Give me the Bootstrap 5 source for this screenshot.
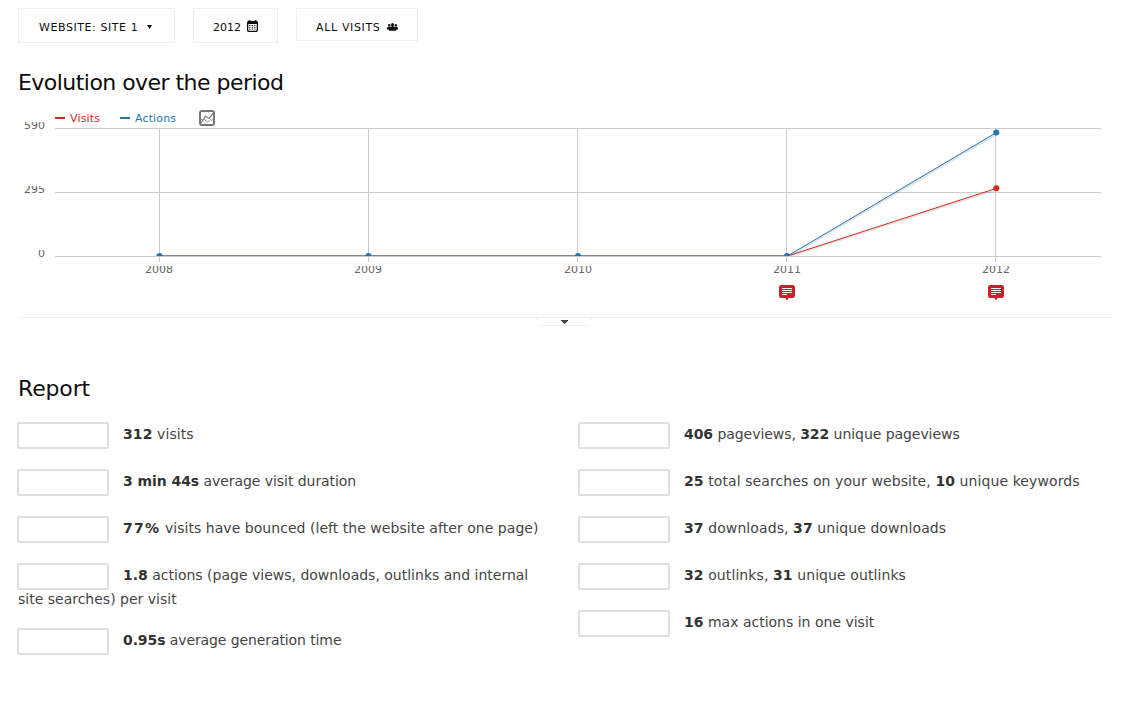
<!DOCTYPE html>
<html lang="en">
<head>
<meta charset="utf-8">
<meta name="viewport" content="width=device-width, initial-scale=1">
<title>Visits overview</title>
<link href="https://cdn.jsdelivr.net/npm/bootstrap@5.3.0/dist/css/bootstrap.min.css" rel="stylesheet">
<style>
body{font-family:"DejaVu Sans",sans-serif;color:#444;background:#fff;font-size:14px;line-height:18px}
.page{padding:8px 15px 0 18px}
.selectors{gap:18px;height:35px}
.selector{border:1px solid #f0f0f0;font-size:11px;line-height:15px;color:#0d0d0d;padding:3px 19px 0;height:35px;white-space:nowrap}
.selector-site{width:157px;padding-left:20px;padding-right:22px;letter-spacing:.57px}
.selector-date{width:85px}
.selector-segment{width:122px;height:33px;padding-top:5px;letter-spacing:.65px}
.section-title{font-size:22px;line-height:28px;font-weight:400;color:#0d0d0d;white-space:nowrap}
.evolution{height:221px;border-bottom:1px solid #eee}
.evolution-title{margin-top:26px;letter-spacing:-.54px}
.chart{display:block;overflow:visible}
.chart text{font-size:11px}
.expander{width:58px;height:8px;margin:0 0 0 517px}
.expander svg{display:block}
.report-title{margin-top:49px;letter-spacing:-.15px}
.metrics{margin-top:19px}
.metrics-left{width:561px;padding-right:36px}
.metrics-right{width:520px}
.metric{margin:0 0 20px}
.metric b{font-weight:700;color:#333}
.snug{letter-spacing:-.06px}
.snugger{letter-spacing:-.1px}
.airy{letter-spacing:.09px}
.percent{letter-spacing:.04px}
.percent b{letter-spacing:1.3px}
.spark{display:inline-block;width:92px;height:27px;border:2px solid #dfdfdf;border-radius:2px;vertical-align:-10px;margin:0 14px 0 -1px}
</style>
</head>
<body>
<main class="page">
  <div class="selectors d-flex align-items-start">
    <div class="selector selector-site d-flex align-items-center"><span>WEBSITE: SITE 1</span>
      <svg class="ms-auto" width="5" height="4" viewBox="0 0 5 4"><path d="M0 0h5L2.500 4z" fill="#0d0d0d"/></svg></div>
    <div class="selector selector-date d-flex align-items-center"><span>2012</span>
      <svg class="ms-auto flex-shrink-0" style="margin-top:-2px" width="11" height="12" viewBox="0 0 11 12"><path fill="#0d0d0d" fill-rule="evenodd" d="M1.500 1V.2h2V1h4V.2h2V1Q11 1 11 2.500v7.800Q11 12 9.400 12H1.600Q0 12 0 10.300V2.500Q0 1 1.500 1M1.300 4v6q0 .8.800.8h6.800q.8 0 .8-.8V4z"/><path d="M2.200 5.500h7M2.200 7.300h7M2.200 9.100h7" stroke="#0d0d0d" stroke-dasharray="1.200 1.300"/></svg></div>
    <div class="selector selector-segment d-flex align-items-center"><span>ALL VISITS</span>
      <svg class="ms-auto flex-shrink-0" width="11" height="8" viewBox="0 0 11 8"><g fill="#0d0d0d"><circle cx="5.500" cy="1.600" r="1.500"/><circle cx="2.200" cy="2.300" r="1.200"/><circle cx="8.800" cy="2.300" r="1.200"/><path d="M4.500 2h2v2h-2zM0 6.500V5.200q0-1.500 1.300-1.500h8.400Q11 3.700 11 5.200v1.300H9.500Q9.300 7.800 8.300 7.800H2.700Q1.700 7.800 1.500 6.500z"/></g></svg></div>
  </div>

  <h2 class="section-title evolution-title mb-0"><span>Evolution over the period</span></h2>
  <section class="evolution">
    <svg class="chart" width="1093" height="211" viewBox="18 97 1093 211">
      <defs>
        <clipPath id="labels"><path d="M18 122h36v20H18zM18 186h36v20H18zM18 250h36v20H18zM120 266h960v20H120z"/></clipPath>
        <clipPath id="plot"><path d="M55 120h1050v136H55z"/></clipPath>
      </defs>
      <path d="M55 118h10" stroke="#d4291f" stroke-width="2"/>
      <text x="70" y="122" fill="#d4291f" textLength="30">Visits</text>
      <path d="M120 118h10" stroke="#1f78b4" stroke-width="2"/>
      <text x="135" y="122" fill="#1f78b4" textLength="41">Actions</text>
      <g fill="none" stroke="#777"><rect x="200" y="111" width="14" height="14" rx="2" stroke-width="2"/><path d="M201 123l4.500-7 3.500 2.500 4.500-5.500" stroke="#808080" stroke-width="1.200"/><path d="M201 119.500l3-.5 3.500 3 3-2.500 1.500 1 1.500-2" stroke="#999"/></g>
      <path d="M55 128.500h1046M55 192.500h1046M55 256.500h1046M159.500 128v134M368.500 128v134M577.500 128v134M786.500 128v134M995.500 128v134" stroke="#ccc" fill="none"/>
      <g clip-path="url(#labels)" fill="#666">
        <g text-anchor="end"><text x="45" y="129">590</text><text x="45" y="193">295</text><text x="45" y="257">0</text></g>
        <g text-anchor="middle"><text x="159" y="273">2008</text><text x="368" y="273">2009</text><text x="578" y="273">2010</text><text x="787" y="273">2011</text><text x="996" y="273">2012</text></g>
      </g>
      <g clip-path="url(#plot)" fill="none">
        <path d="M160 255.500h627" stroke="#858099"/>
        <path d="M789 256.500L997 189.600M789 256.500L997 133.800" stroke="#000" stroke-opacity=".11" stroke-width="2"/>
        <path d="M787.500 256L996.500 188.300" stroke="#d4291f"/>
        <path d="M787.500 256L996.500 132.500" stroke="#1f78b4"/>
        <g fill="#1f78b4"><circle cx="159.500" cy="256" r="3"/><circle cx="368.500" cy="256" r="3"/><circle cx="578" cy="256" r="3"/><circle cx="787" cy="256" r="3"/><circle cx="996.300" cy="132.500" r="3"/></g>
        <circle cx="996.300" cy="188.300" r="3" fill="#d4291f"/>
      </g>
      <g id="note"><path d="M781.500 285h11q2.500 0 2.500 2.500v8q0 2.500-2.500 2.500h-4l-1.500 2.800-1.500-2.800h-4q-2.500 0-2.500-2.500v-8q0-2.500 2.500-2.500" fill="#cb2027"/><path d="M782 288.500h10M782 290.500h10M782 292.500h10M782 294.500h5" stroke="#fff"/></g>
      <use href="#note" x="209"/>
    </svg>
  </section>
  <div class="expander"><svg width="58" height="8" viewBox="0 0 58 8"><path d="M1.500 0v2M56.500 0v2M6 7.500h46" stroke="#eee" fill="none"/><path d="M25.500 2h7.500v1L29.300 6z" fill="#444"/></svg></div>

  <h2 class="section-title report-title mb-0"><span>Report</span></h2>
  <section class="metrics d-flex">
    <div class="metrics-left">
      <p class="metric airy"><span class="spark"></span><b>312</b> visits</p>
      <p class="metric snug"><span class="spark"></span><b>3 min 44s</b> average visit duration</p>
      <p class="metric percent"><span class="spark"></span><b>77%</b> visits have bounced (left the website after one page)</p>
      <p class="metric"><span class="spark"></span><b>1.8</b> actions (page views, downloads, outlinks and internal site searches) per visit</p>
      <p class="metric snugger"><span class="spark"></span><b>0.95s</b> average generation time</p>
    </div>
    <div class="metrics-right">
      <p class="metric snug"><span class="spark"></span><b>406</b> pageviews, <b>322</b> unique pageviews</p>
      <p class="metric airy"><span class="spark"></span><b>25</b> total searches on your website, <b>10</b> unique keywords</p>
      <p class="metric airy"><span class="spark"></span><b>37</b> downloads, <b>37</b> unique downloads</p>
      <p class="metric airy"><span class="spark"></span><b>32</b> outlinks, <b>31</b> unique outlinks</p>
      <p class="metric"><span class="spark"></span><b>16</b> max actions in one visit</p>
    </div>
  </section>
</main>
<script src="https://cdn.jsdelivr.net/npm/bootstrap@5.3.0/dist/js/bootstrap.bundle.min.js"></script>
</body>
</html>
